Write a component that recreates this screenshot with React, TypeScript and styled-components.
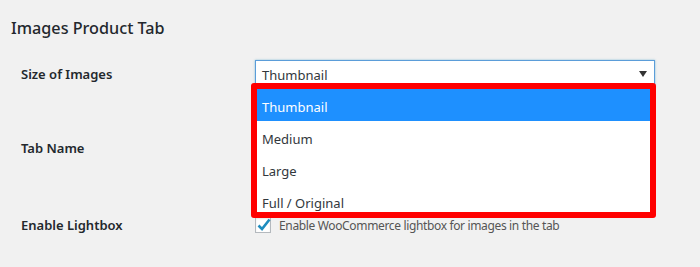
import React from "react";
import styled, { createGlobalStyle } from "styled-components";

const Global = createGlobalStyle`
  html, body { margin: 0; padding: 0; background: #f1f1f1; }
  body { font-family: "Noto Sans", "Open Sans", sans-serif; color: #23282d; }
`;

const Page = styled.div`
  width: 700px;
  height: 267px;
  box-sizing: border-box;
  padding: 16px 0 0 11px;
  overflow: hidden;
`;

const Heading = styled.h2`
  margin: 0;
  font-size: 16.2px;
  line-height: 24px;
  font-weight: 500;
  color: #23282d;
`;

const Form = styled.div`
  display: flex;
  flex-direction: column;
  margin-top: 20px;
`;

const Row = styled.div<{ $gap: number }>`
  display: flex;
  align-items: center;
  min-height: 28px;
  margin-top: ${(p) => p.$gap}px;
`;

const Label = styled.div`
  width: 244px;
  padding-left: 10px;
  box-sizing: border-box;
  font-size: 13px;
  font-weight: 600;
  color: #23282d;
`;

const Field = styled.div`
  position: relative;
  width: 400px;
`;

const SelectBox = styled.div`
  height: 28px;
  box-sizing: border-box;
  border: 1px solid #5b9dd9;
  background: #fff;
  display: flex;
  align-items: center;
  justify-content: space-between;
  padding: 2px 6px 0 6px;
  font-size: 13px;
  color: #32373c;
  box-shadow: 0 0 2px rgba(30, 140, 190, 0.5);
`;

const Arrow = styled.span`
  width: 0;
  height: 0;
  border-left: 4px solid transparent;
  border-right: 4px solid transparent;
  border-top: 6px solid #333;
  margin: 0 1px 2px 0;
`;

const TextInput = styled.div`
  height: 28px;
  box-sizing: border-box;
  border: 1px solid #ddd;
  background: #fff;
`;

const Dropdown = styled.ul`
  position: absolute;
  left: -4px;
  top: 23px;
  width: 405px;
  height: 135px;
  box-sizing: border-box;
  margin: 0;
  padding: 0;
  list-style: none;
  background: #fff;
  border: 6px solid #ff0000;
  border-radius: 3px;
  overflow: hidden;
  z-index: 5;
`;

const Option = styled.li<{ $active?: boolean }>`
  height: 32px;
  box-sizing: border-box;
  display: flex;
  align-items: center;
  padding: 3px 0 0 5px;
  font-size: 13px;
  color: ${(p) => (p.$active ? "#fff" : "#32373c")};
  background: ${(p) => (p.$active ? "#1e90ff" : "transparent")};
`;

const CheckLine = styled.label`
  display: flex;
  align-items: center;
  gap: 8px;
  font-size: 12px;
  letter-spacing: -0.35px;
  color: #555;
`;

const CheckBox = styled.span`
  width: 16px;
  height: 16px;
  box-sizing: border-box;
  border: 1px solid #b4b9be;
  background: #fff;
  box-shadow: inset 0 1px 2px rgba(0, 0, 0, 0.1);
  position: relative;
  display: inline-block;
`;

const Check = styled.svg`
  position: absolute;
  left: -1px;
  top: -2px;
`;

export default function App() {
  return (
    <>
      <Global />
      <Page>
        <Heading>Images Product Tab</Heading>
        <Form>
          <Row $gap={0}>
            <Label>Size of Images</Label>
            <Field>
              <SelectBox>
                <span>Thumbnail</span>
                <Arrow />
              </SelectBox>
              <Dropdown>
                <Option $active>Thumbnail</Option>
                <Option>Medium</Option>
                <Option>Large</Option>
                <Option>Full / Original</Option>
              </Dropdown>
            </Field>
          </Row>
          <Row $gap={46}>
            <Label>Tab Name</Label>
            <Field>
              <TextInput />
            </Field>
          </Row>
          <Row $gap={49}>
            <Label>Enable Lightbox</Label>
            <CheckLine>
              <CheckBox>
                <Check width="18" height="18" viewBox="0 0 18 18">
                  <path d="M3.5 9.5 L7 13 L14.5 3.5" fill="none" stroke="#1e8cbe" strokeWidth="2.6" />
                </Check>
              </CheckBox>
              Enable WooCommerce lightbox for images in the tab
            </CheckLine>
          </Row>
        </Form>
      </Page>
    </>
  );
}
